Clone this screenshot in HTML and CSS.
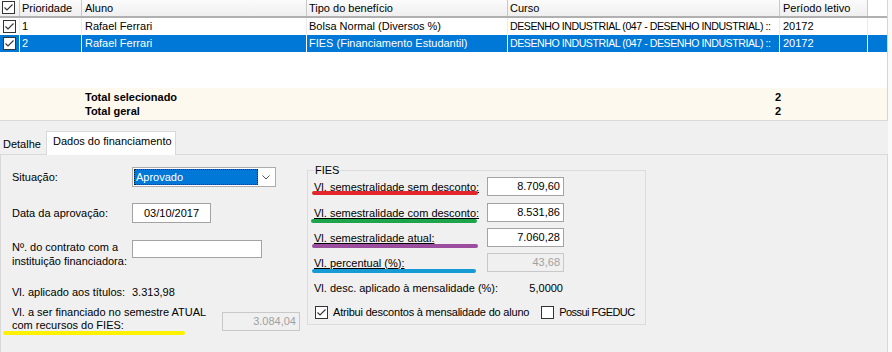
FILE: index.html
```html
<!DOCTYPE html>
<html lang="pt">
<head>
<meta charset="utf-8">
<link rel="stylesheet" href="styles.css">
</head>
<body>
<div class="app">
  <div class="grid">
    <div class="grow ghead">
      <div class="c c-chk"><span class="cb"><svg viewBox="0 0 11 11" width="11" height="11"><path d="M1.5 5.5 L4 8 L9.5 2.5" fill="none" stroke="#333" stroke-width="1.1"/></svg></span></div>
      <div class="c c-prio">Prioridade</div>
      <div class="c c-aluno">Aluno</div>
      <div class="c c-tipo">Tipo do benefício</div>
      <div class="c c-curso">Curso</div>
      <div class="c c-per">Período letivo</div>
      <div class="c c-fill"></div>
    </div>
    <div class="grow">
      <div class="c c-chk"><span class="cb"><svg viewBox="0 0 11 11" width="11" height="11"><path d="M1.5 5.5 L4 8 L9.5 2.5" fill="none" stroke="#333" stroke-width="1.1"/></svg></span></div>
      <div class="c c-prio">1</div>
      <div class="c c-aluno">Rafael Ferrari</div>
      <div class="c c-tipo">Bolsa Normal (Diversos %)</div>
      <div class="c c-curso caps">DESENHO INDUSTRIAL (047 - DESENHO INDUSTRIAL) ::</div>
      <div class="c c-per">20172</div>
      <div class="c c-fill"></div>
    </div>
    <div class="grow sel">
      <div class="c c-chk"><span class="cb"><svg viewBox="0 0 11 11" width="11" height="11"><path d="M1.5 5.5 L4 8 L9.5 2.5" fill="none" stroke="#333" stroke-width="1.1"/></svg></span></div>
      <div class="c c-prio">2</div>
      <div class="c c-aluno">Rafael Ferrari</div>
      <div class="c c-tipo">FIES (Financiamento Estudantil)</div>
      <div class="c c-curso caps">DESENHO INDUSTRIAL (047 - DESENHO INDUSTRIAL) ::</div>
      <div class="c c-per">20172</div>
      <div class="c c-fill"></div>
    </div>
    <div class="gempty"></div>
    <div class="gfoot">
      <div class="ft-row"><span class="ft-label">Total selecionado</span><span class="ft-val">2</span></div>
      <div class="ft-row"><span class="ft-label">Total geral</span><span class="ft-val">2</span></div>
    </div>
  </div>

  <div class="tabs">
    <div class="tab">Detalhe</div>
    <div class="tab on">Dados do financiamento</div>
  </div>

  <div class="panel">
    <div class="left">
      <div class="frow r1">
        <span class="flabel">Situação:</span>
        <div class="combo">
          <div class="combo-sel">Aprovado</div>
          <div class="combo-btn"><svg viewBox="0 0 8 5" width="8" height="5"><path d="M0.5 0.5 L4 4 L7.5 0.5" fill="none" stroke="#555" stroke-width="1"/></svg></div>
        </div>
      </div>
      <div class="frow r2">
        <span class="flabel">Data da aprovação:</span>
        <div class="in in-date">03/10/2017</div>
      </div>
      <div class="frow r3">
        <span class="flabel">Nº. do contrato com a instituição financiadora:</span>
        <div class="in in-contr"></div>
      </div>
      <div class="frow r4">
        <span class="flabel">Vl. aplicado aos títulos:</span>
        <span>3.313,98</span>
      </div>
      <div class="frow r5">
        <span class="flabel-wide mk mk-y">Vl. a ser financiado no semestre ATUAL com recursos do FIES:</span>
        <div class="in dis in-fin">3.084,04</div>
      </div>
    </div>

    <fieldset class="fies">
      <legend>FIES</legend>
      <div class="frow2 ra">
        <span class="l2"><span class="mk mk-r">Vl. semestralidade sem desconto:</span></span>
        <div class="in">8.709,60</div>
      </div>
      <div class="frow2 rb">
        <span class="l2"><span class="mk mk-g">Vl. semestralidade com desconto:</span></span>
        <div class="in">8.531,86</div>
      </div>
      <div class="frow2 rc">
        <span class="l2"><span class="mk mk-p">Vl. semestralidade atual:</span></span>
        <div class="in">7.060,28</div>
      </div>
      <div class="frow2 rd">
        <span class="l2"><span class="mk mk-b">Vl. percentual (%):</span></span>
        <div class="in dis">43,68</div>
      </div>
      <div class="frow2 re">
        <span class="l2">Vl. desc. aplicado à mensalidade (%):</span>
        <span class="val">5,0000</span>
      </div>
      <div class="frow2 rf">
        <span class="cb cb-f"><svg viewBox="0 0 11 11" width="11" height="11"><path d="M1.5 5.5 L4 8 L9.5 2.5" fill="none" stroke="#333" stroke-width="1.1"/></svg></span>
        <span class="cbl">Atribui descontos à mensalidade do aluno</span>
        <span class="cb cb-f2"></span>
        <span class="cbl cbl-caps">Possui FGEDUC</span>
      </div>
    </fieldset>
  </div>
</div>
</body>
</html>
```

FILE: styles.css
```css
* { box-sizing: border-box; }
html { background: #fafafa; }
body {
  margin: 0;
  font-family: "Liberation Sans", Arial, sans-serif;
  font-size: 11px;
  color: #000;
}
.app {
  width: 888px;
  height: 352px;
  background: #f0f0f0;
  overflow: hidden;
}

/* grid */
.grid {
  width: 888px;
  height: 121px;
  background: #fff;
  border-right: 1px solid #d5d5d5;
  border-bottom: 1px solid #dadada;
  display: flex;
  flex-direction: column;
}
.grow {
  display: flex;
  height: 17px;
  line-height: 17px;
  white-space: nowrap;
  flex: none;
}
.ghead {
  height: 18px;
  line-height: 16px;
  background: linear-gradient(#fbfbfb, #efefef);
  border-bottom: 2px solid #b0b0b0;
}
.c {
  flex: none;
  overflow: hidden;
  padding-left: 2px;
  border-right: 1px solid #ececec;
}
.ghead .c { border-right-color: #c8c8c8; }
.c-chk { width: 20px; padding: 2px 0 0 3px; }
.ghead .c-chk { padding: 1px 0 0 2px; }
.c-prio { width: 62px; }
.c-aluno { width: 225px; padding-left: 3px; }
.c-tipo { width: 201px; }
.c-curso { width: 272px; }
.caps { letter-spacing: -0.45px; font-size: 10.6px; }
.c-per { width: 88px; padding-left: 3px; }
.c-fill { flex: 1; border-right: 0; }
.ghead .c-fill { background: #fff; }
.sel { background: #0078d7; color: #fff; }
.sel .c { border-right-color: #fff; }
.sel .c-fill { margin-right: 1px; }

.cb {
  display: inline-flex;
  align-items: center;
  justify-content: center;
  width: 13px;
  height: 13px;
  border: 1px solid #333;
  background: #fff;
  vertical-align: top;
  flex: none;
}
.gempty { flex: none; height: 36px; }
.gfoot {
  flex: 1;
  background: #fdf9ef;
  padding-top: 2px;
  font-weight: bold;
}
.ft-row { display: flex; height: 14px; line-height: 14px; padding-left: 85px; }
.ft-label { width: 690px; }

/* tabs */
.tabs {
  display: flex;
  align-items: flex-end;
  height: 33px;
}
.tab {
  height: 21px;
  line-height: 22px;
  width: 46px;
  padding-left: 3px;
}
.tab.on {
  position: relative;
  z-index: 1;
  width: 130px;
  height: 24px;
  line-height: 18px;
  padding-left: 6px;
  margin-bottom: -1px;
  background: #fff;
  border: 1px solid #d9d9d9;
  border-bottom: 0;
}

/* panel */
.panel {
  display: flex;
  align-items: flex-start;
  height: 205px;
  border: 1px solid #d9d9d9;
  padding: 12px 0 0 11px;
}
.left { width: 295px; flex: none; }
.frow { display: flex; align-items: center; }
.flabel { width: 120px; flex: none; line-height: 14px; }
.r1 { height: 20px; }
.r2 { height: 20px; margin-top: 16px; }
.r3 { margin-top: 17px; align-items: flex-start; }
.r4 { margin-top: 17px; height: 14px; }
.r5 { margin-top: 7px; align-items: flex-start; }
.flabel-wide { width: 210px; flex: none; line-height: 13px; }

.combo {
  display: flex;
  width: 144px;
  height: 20px;
  border: 1px solid #acacac;
  background: #fff;
  padding: 1px;
}
.combo-sel {
  flex: 1;
  background: #0078d7;
  color: #fff;
  border: 1px dotted #1d1d1d;
  line-height: 14px;
  padding-left: 1px;
}
.combo-btn {
  width: 16px;
  display: flex;
  align-items: center;
  justify-content: center;
}

.in {
  width: 77px;
  height: 19px;
  border: 1px solid #a3a3a3;
  background: #fff;
  text-align: right;
  padding-right: 3px;
  line-height: 17px;
  flex: none;
}
.in.dis { background: #f0f0f0; border-color: #c8c8c8; color: #a0a0a0; }
.in-date { width: 79px; height: 20px; text-align: center; padding: 0; line-height: 18px; }
.in-contr { width: 130px; height: 18px; }
.in-fin { margin-top: 6px; width: 78px; }

/* fieldset */
.fies {
  flex: none;
  width: 339px;
  min-width: 0;
  margin: -4px 0 0 0;
  padding: 0 6px 5px 6px;
  border: 1px solid #dcdcdc;
}
.fies legend {
  padding: 0 1px;
  line-height: 14px;
  margin-left: 0;
}
.frow2 { display: flex; align-items: center; height: 19px; white-space: nowrap; }
.l2 { width: 173px; flex: none; line-height: 14px; }
.rb { margin-top: 7px; }
.rc { margin-top: 6px; }
.rd { margin-top: 6px; }
.re { margin-top: 9px; height: 14px; }
.re .val { width: 77px; flex: none; text-align: right; padding-right: 1px; }
.rf { margin-top: 11px; height: 13px; }
.cb-f { margin-left: 1px; }
.cbl { margin-left: 5px; line-height: 13px; flex: none; letter-spacing: -0.2px; }
.cbl-caps { letter-spacing: -0.55px; }
.cb-f2 { margin-left: 12px; }

/* annotation marks */
.mk { position: relative; text-decoration: underline; }
.mk::after {
  content: "";
  position: absolute;
  left: -2px;
  top: 11px;
  width: 166px;
  height: 4px;
  border-radius: 2px;
}
.mk-r::after { background: #e3262b; top: 10px; }
.mk-g::after { background: #1ea44b; top: 12px; left: -3px; }
.mk-p::after { background: #9c4e9e; top: 12px; }
.mk-b::after { background: #169bd5; top: 12px; width: 164px; }
.mk-y { text-decoration: none; }
.mk-y::after { background: #fff200; left: -9px; top: 25px; width: 182px; }
```
